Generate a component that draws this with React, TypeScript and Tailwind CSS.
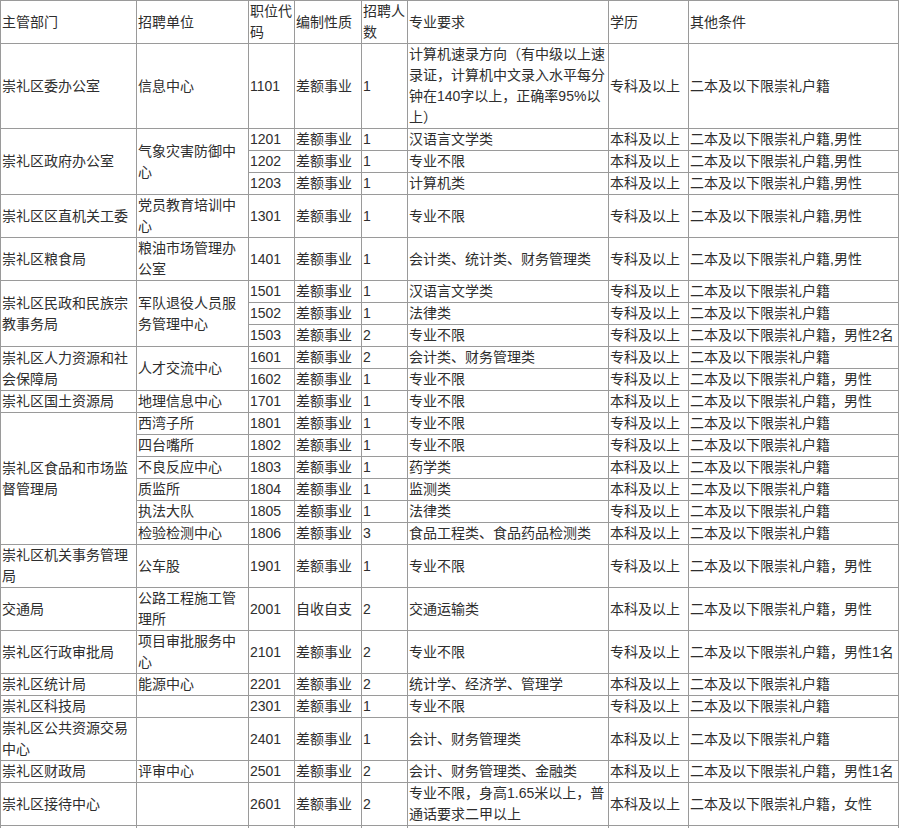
type Cell = { text: string; rowSpan?: number };

const HEADERS = ["主管部门", "招聘单位", "职位代码", "编制性质", "招聘人数", "专业要求", "学历", "其他条件"];

const COL_WIDTHS = ["w-[136px]", "w-[112px]", "w-[46px]", "w-[67px]", "w-[46px]", "w-[201px]", "w-[80px]", "w-[210px]"];

const HUJI = "二本及以下限崇礼户籍";

// each row lists only the cells it renders; merged cells carry rowSpan on their first row
const ROWS: Cell[][] = [
  [
    { text: "崇礼区委办公室" },
    { text: "信息中心" },
    { text: "1101" },
    { text: "差额事业" },
    { text: "1" },
    { text: "计算机速录方向（有中级以上速录证，计算机中文录入水平每分钟在140字以上，正确率95%以上）" },
    { text: "专科及以上" },
    { text: HUJI },
  ],
  [
    { text: "崇礼区政府办公室", rowSpan: 3 },
    { text: "气象灾害防御中心", rowSpan: 3 },
    { text: "1201" },
    { text: "差额事业" },
    { text: "1" },
    { text: "汉语言文学类" },
    { text: "本科及以上" },
    { text: HUJI + ",男性" },
  ],
  [{ text: "1202" }, { text: "差额事业" }, { text: "1" }, { text: "专业不限" }, { text: "本科及以上" }, { text: HUJI + ",男性" }],
  [{ text: "1203" }, { text: "差额事业" }, { text: "1" }, { text: "计算机类" }, { text: "本科及以上" }, { text: HUJI + ",男性" }],
  [
    { text: "崇礼区区直机关工委" },
    { text: "党员教育培训中心" },
    { text: "1301" },
    { text: "差额事业" },
    { text: "1" },
    { text: "专业不限" },
    { text: "专科及以上" },
    { text: HUJI + ",男性" },
  ],
  [
    { text: "崇礼区粮食局" },
    { text: "粮油市场管理办公室" },
    { text: "1401" },
    { text: "差额事业" },
    { text: "1" },
    { text: "会计类、统计类、财务管理类" },
    { text: "专科及以上" },
    { text: HUJI + ",男性" },
  ],
  [
    { text: "崇礼区民政和民族宗教事务局", rowSpan: 3 },
    { text: "军队退役人员服务管理中心", rowSpan: 3 },
    { text: "1501" },
    { text: "差额事业" },
    { text: "1" },
    { text: "汉语言文学类" },
    { text: "专科及以上" },
    { text: HUJI },
  ],
  [{ text: "1502" }, { text: "差额事业" }, { text: "1" }, { text: "法律类" }, { text: "专科及以上" }, { text: HUJI }],
  [{ text: "1503" }, { text: "差额事业" }, { text: "2" }, { text: "专业不限" }, { text: "专科及以上" }, { text: HUJI + "，男性2名" }],
  [
    { text: "崇礼区人力资源和社会保障局", rowSpan: 2 },
    { text: "人才交流中心", rowSpan: 2 },
    { text: "1601" },
    { text: "差额事业" },
    { text: "2" },
    { text: "会计类、财务管理类" },
    { text: "专科及以上" },
    { text: HUJI },
  ],
  [{ text: "1602" }, { text: "差额事业" }, { text: "1" }, { text: "专业不限" }, { text: "专科及以上" }, { text: HUJI + "，男性" }],
  [
    { text: "崇礼区国土资源局" },
    { text: "地理信息中心" },
    { text: "1701" },
    { text: "差额事业" },
    { text: "1" },
    { text: "专业不限" },
    { text: "本科及以上" },
    { text: HUJI + "，男性" },
  ],
  [
    { text: "崇礼区食品和市场监督管理局", rowSpan: 6 },
    { text: "西湾子所" },
    { text: "1801" },
    { text: "差额事业" },
    { text: "1" },
    { text: "专业不限" },
    { text: "专科及以上" },
    { text: HUJI },
  ],
  [{ text: "四台嘴所" }, { text: "1802" }, { text: "差额事业" }, { text: "1" }, { text: "专业不限" }, { text: "专科及以上" }, { text: HUJI }],
  [{ text: "不良反应中心" }, { text: "1803" }, { text: "差额事业" }, { text: "1" }, { text: "药学类" }, { text: "本科及以上" }, { text: HUJI }],
  [{ text: "质监所" }, { text: "1804" }, { text: "差额事业" }, { text: "1" }, { text: "监测类" }, { text: "本科及以上" }, { text: HUJI }],
  [{ text: "执法大队" }, { text: "1805" }, { text: "差额事业" }, { text: "1" }, { text: "法律类" }, { text: "专科及以上" }, { text: HUJI }],
  [
    { text: "检验检测中心" },
    { text: "1806" },
    { text: "差额事业" },
    { text: "3" },
    { text: "食品工程类、食品药品检测类" },
    { text: "本科及以上" },
    { text: HUJI },
  ],
  [
    { text: "崇礼区机关事务管理局" },
    { text: "公车股" },
    { text: "1901" },
    { text: "差额事业" },
    { text: "1" },
    { text: "专业不限" },
    { text: "专科及以上" },
    { text: HUJI + "，男性" },
  ],
  [
    { text: "交通局" },
    { text: "公路工程施工管理所" },
    { text: "2001" },
    { text: "自收自支" },
    { text: "2" },
    { text: "交通运输类" },
    { text: "本科及以上" },
    { text: HUJI + "，男性" },
  ],
  [
    { text: "崇礼区行政审批局" },
    { text: "项目审批服务中心" },
    { text: "2101" },
    { text: "差额事业" },
    { text: "2" },
    { text: "专业不限" },
    { text: "专科及以上" },
    { text: HUJI + "，男性1名" },
  ],
  [
    { text: "崇礼区统计局" },
    { text: "能源中心" },
    { text: "2201" },
    { text: "差额事业" },
    { text: "2" },
    { text: "统计学、经济学、管理学" },
    { text: "本科及以上" },
    { text: HUJI },
  ],
  [
    { text: "崇礼区科技局" },
    { text: "" },
    { text: "2301" },
    { text: "差额事业" },
    { text: "1" },
    { text: "专业不限" },
    { text: "专科及以上" },
    { text: HUJI },
  ],
  [
    { text: "崇礼区公共资源交易中心" },
    { text: "" },
    { text: "2401" },
    { text: "差额事业" },
    { text: "1" },
    { text: "会计、财务管理类" },
    { text: "本科及以上" },
    { text: HUJI },
  ],
  [
    { text: "崇礼区财政局" },
    { text: "评审中心" },
    { text: "2501" },
    { text: "差额事业" },
    { text: "2" },
    { text: "会计、财务管理类、金融类" },
    { text: "本科及以上" },
    { text: HUJI + "，男性1名" },
  ],
  [
    { text: "崇礼区接待中心" },
    { text: "" },
    { text: "2601" },
    { text: "差额事业" },
    { text: "2" },
    { text: "专业不限，身高1.65米以上，普通话要求二甲以上" },
    { text: "本科及以上" },
    { text: HUJI + "，女性" },
  ],
  // next row is cut off by the bottom edge
  [{ text: "" }, { text: "" }, { text: "" }, { text: "" }, { text: "" }, { text: "" }, { text: "" }, { text: "" }],
];

const cellClass = "border border-[#9a9a9a] p-0 pl-px align-middle text-left font-normal break-all";

export default function App() {
  return (
    <div
      className="w-[901px] min-h-[828px] bg-white text-[14px] leading-[21px] text-[#2e2e2e]"
      style={{ fontFamily: '"Liberation Sans", "Noto Sans CJK SC", sans-serif' }}
    >
      <table className="w-[898px] table-fixed border-collapse">
        <colgroup>
          {COL_WIDTHS.map((w, i) => (
            <col key={i} className={w} />
          ))}
        </colgroup>
        <thead>
          <tr>
            {HEADERS.map((h) => (
              <th key={h} className={cellClass}>
                {h}
              </th>
            ))}
          </tr>
        </thead>
        <tbody>
          {ROWS.map((row, r) => (
            <tr key={r}>
              {row.map((cell, c) => (
                <td key={c} rowSpan={cell.rowSpan} className={cellClass}>
                  {cell.text || "\u00a0"}
                </td>
              ))}
            </tr>
          ))}
        </tbody>
      </table>
    </div>
  );
}
